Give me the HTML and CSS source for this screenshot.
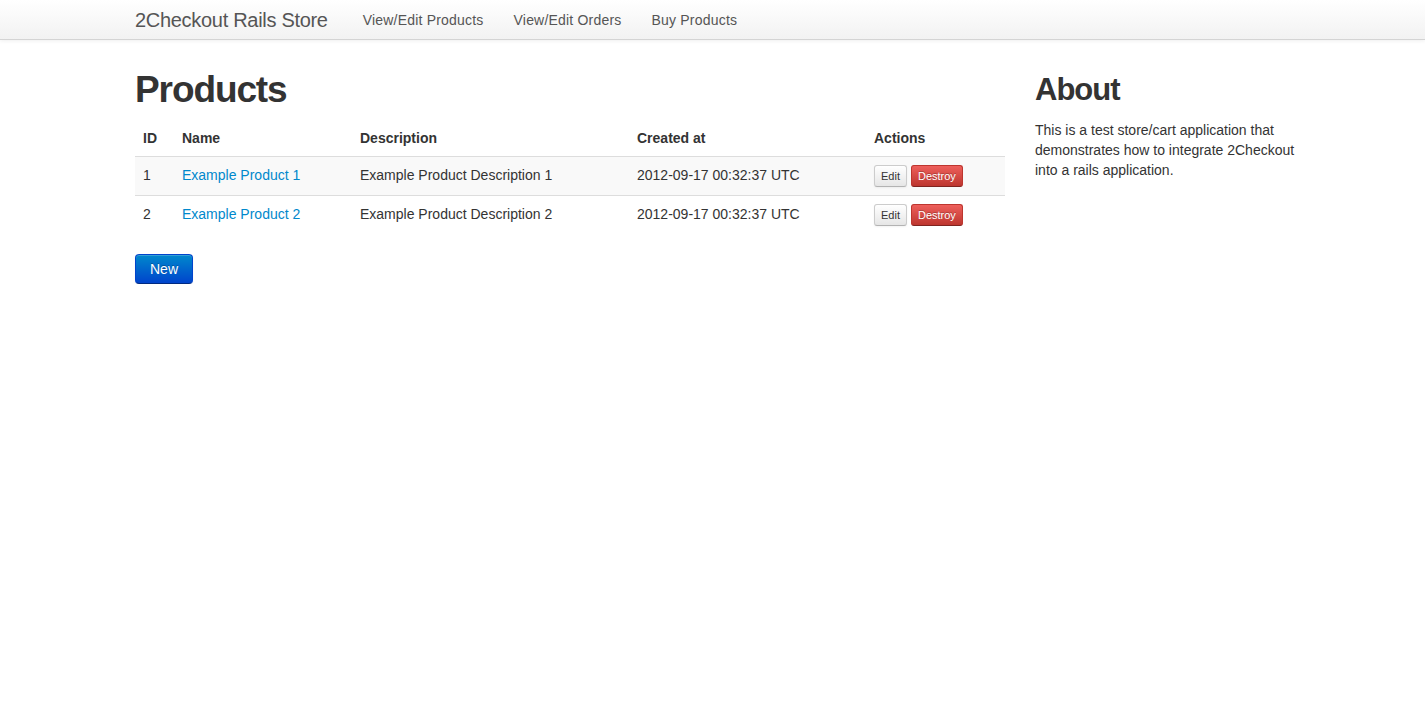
FILE: index.html
```html
<!DOCTYPE html>
<html>
<head>
<meta charset="utf-8">
<title>2Checkout Rails Store</title>
<link rel="stylesheet" href="styles.css">
</head>
<body>
<div class="navbar">
  <div class="container nav-inner">
    <a class="brand" href="#">2Checkout Rails Store</a>
    <ul class="nav">
      <li><a href="#">View/Edit Products</a></li>
      <li><a href="#">View/Edit Orders</a></li>
      <li><a href="#">Buy Products</a></li>
    </ul>
  </div>
</div>
<div class="container row">
  <div class="main">
    <h1>Products</h1>
    <table class="table">
      <thead>
        <tr>
          <th class="c-id">ID</th>
          <th class="c-name">Name</th>
          <th class="c-desc">Description</th>
          <th class="c-date">Created at</th>
          <th class="c-act">Actions</th>
        </tr>
      </thead>
      <tbody>
        <tr class="odd">
          <td>1</td>
          <td><a href="#">Example Product 1</a></td>
          <td>Example Product Description 1</td>
          <td>2012-09-17 00:32:37 UTC</td>
          <td><div class="actions"><a class="btn-mini btn-edit" href="#">Edit</a><a class="btn-mini btn-danger" href="#">Destroy</a></div></td>
        </tr>
        <tr>
          <td>2</td>
          <td><a href="#">Example Product 2</a></td>
          <td>Example Product Description 2</td>
          <td>2012-09-17 00:32:37 UTC</td>
          <td><div class="actions"><a class="btn-mini btn-edit" href="#">Edit</a><a class="btn-mini btn-danger" href="#">Destroy</a></div></td>
        </tr>
      </tbody>
    </table>
    <a class="btn-primary" href="#">New</a>
  </div>
  <div class="side">
    <h2>About</h2>
    <p>This is a test store/cart application that demonstrates how to integrate 2Checkout into a rails application.</p>
  </div>
</div>
</body>
</html>
```

FILE: styles.css
```css
* { box-sizing: border-box; }
html, body { margin: 0; padding: 0; }
body {
  font-family: "Liberation Sans", Arial, sans-serif;
  font-size: 14px;
  line-height: 20px;
  color: #333;
  background: #fff;
}
a { color: #0088cc; text-decoration: none; }
.container { width: 1170px; margin-left: 135px; }

.navbar {
  height: 40px;
  background: linear-gradient(to bottom, #ffffff, #f2f2f2);
  border-bottom: 1px solid #d4d4d4;
  box-shadow: 0 1px 4px rgba(0,0,0,0.065);
}
.nav-inner { display: flex; align-items: center; height: 39px; }
.brand {
  display: block;
  padding: 0 20px;
  margin-left: -20px;
  font-size: 20px;
  line-height: 40px;
  color: #555;
  font-weight: 200;
  letter-spacing: -0.3px;
}
.nav { display: flex; list-style: none; margin: 0; padding: 0; }
.nav a {
  display: block;
  padding: 0 15px;
  line-height: 40px;
  color: #555;
  letter-spacing: 0.2px;
}

.row { display: flex; gap: 30px; padding-top: 20px; }
.main { width: 870px; }
.side { width: 270px; }

h1 {
  font-size: 37px;
  line-height: 40px;
  margin: 10px 0;
  font-weight: bold;
  color: #333;
  letter-spacing: -1.1px;
}
h2 {
  font-size: 31px;
  line-height: 40px;
  margin: 10px 0;
  font-weight: bold;
  color: #333;
  letter-spacing: -1px;
}
p { margin: 0 0 10px; }

.table {
  width: 100%;
  border-collapse: collapse;
  border-spacing: 0;
  margin-bottom: 20px;
  table-layout: fixed;
}
.table th, .table td {
  padding: 8px;
  line-height: 20px;
  text-align: left;
  vertical-align: top;
  border-top: 1px solid #ddd;
}
.table tbody td { padding-top: 8px; padding-bottom: 9px; }
.table thead th { border-top: 0; font-weight: bold; vertical-align: bottom; }
.table tbody tr.odd td { background: #f9f9f9; }
.c-id { width: 39px; }
.c-name { width: 178px; }
.c-desc { width: 277px; }
.c-date { width: 237px; }
.c-act { width: 139px; }

.actions { display: flex; gap: 4px; height: 21px; align-items: flex-start; }
.btn-mini {
  display: inline-block;
  height: 22px;
  padding: 0 6px;
  font-size: 11px;
  line-height: 20px;
  border-radius: 3px;
  border: 1px solid;
}
.btn-edit {
  color: #333;
  background: linear-gradient(to bottom, #ffffff, #e6e6e6);
  border-color: #cccccc #cccccc #b3b3b3;
  box-shadow: inset 0 1px 0 rgba(255,255,255,.2), 0 1px 2px rgba(0,0,0,.05);
}
.btn-danger {
  color: #fff;
  background: linear-gradient(to bottom, #ee5f5b, #bd362f);
  border-color: #bd362f #bd362f #802420;
  text-shadow: 0 -1px 0 rgba(0,0,0,.25);
}
.btn-primary {
  display: inline-block;
  padding: 4px 14px;
  font-size: 14px;
  line-height: 20px;
  color: #fff;
  border-radius: 4px;
  background: linear-gradient(to bottom, #0088cc, #0044cc);
  border: 1px solid #0044cc;
  border-bottom-color: #002a80;
  text-shadow: 0 -1px 0 rgba(0,0,0,.25);
  box-shadow: inset 0 1px 0 rgba(255,255,255,.2), 0 1px 2px rgba(0,0,0,.05);
}
```
